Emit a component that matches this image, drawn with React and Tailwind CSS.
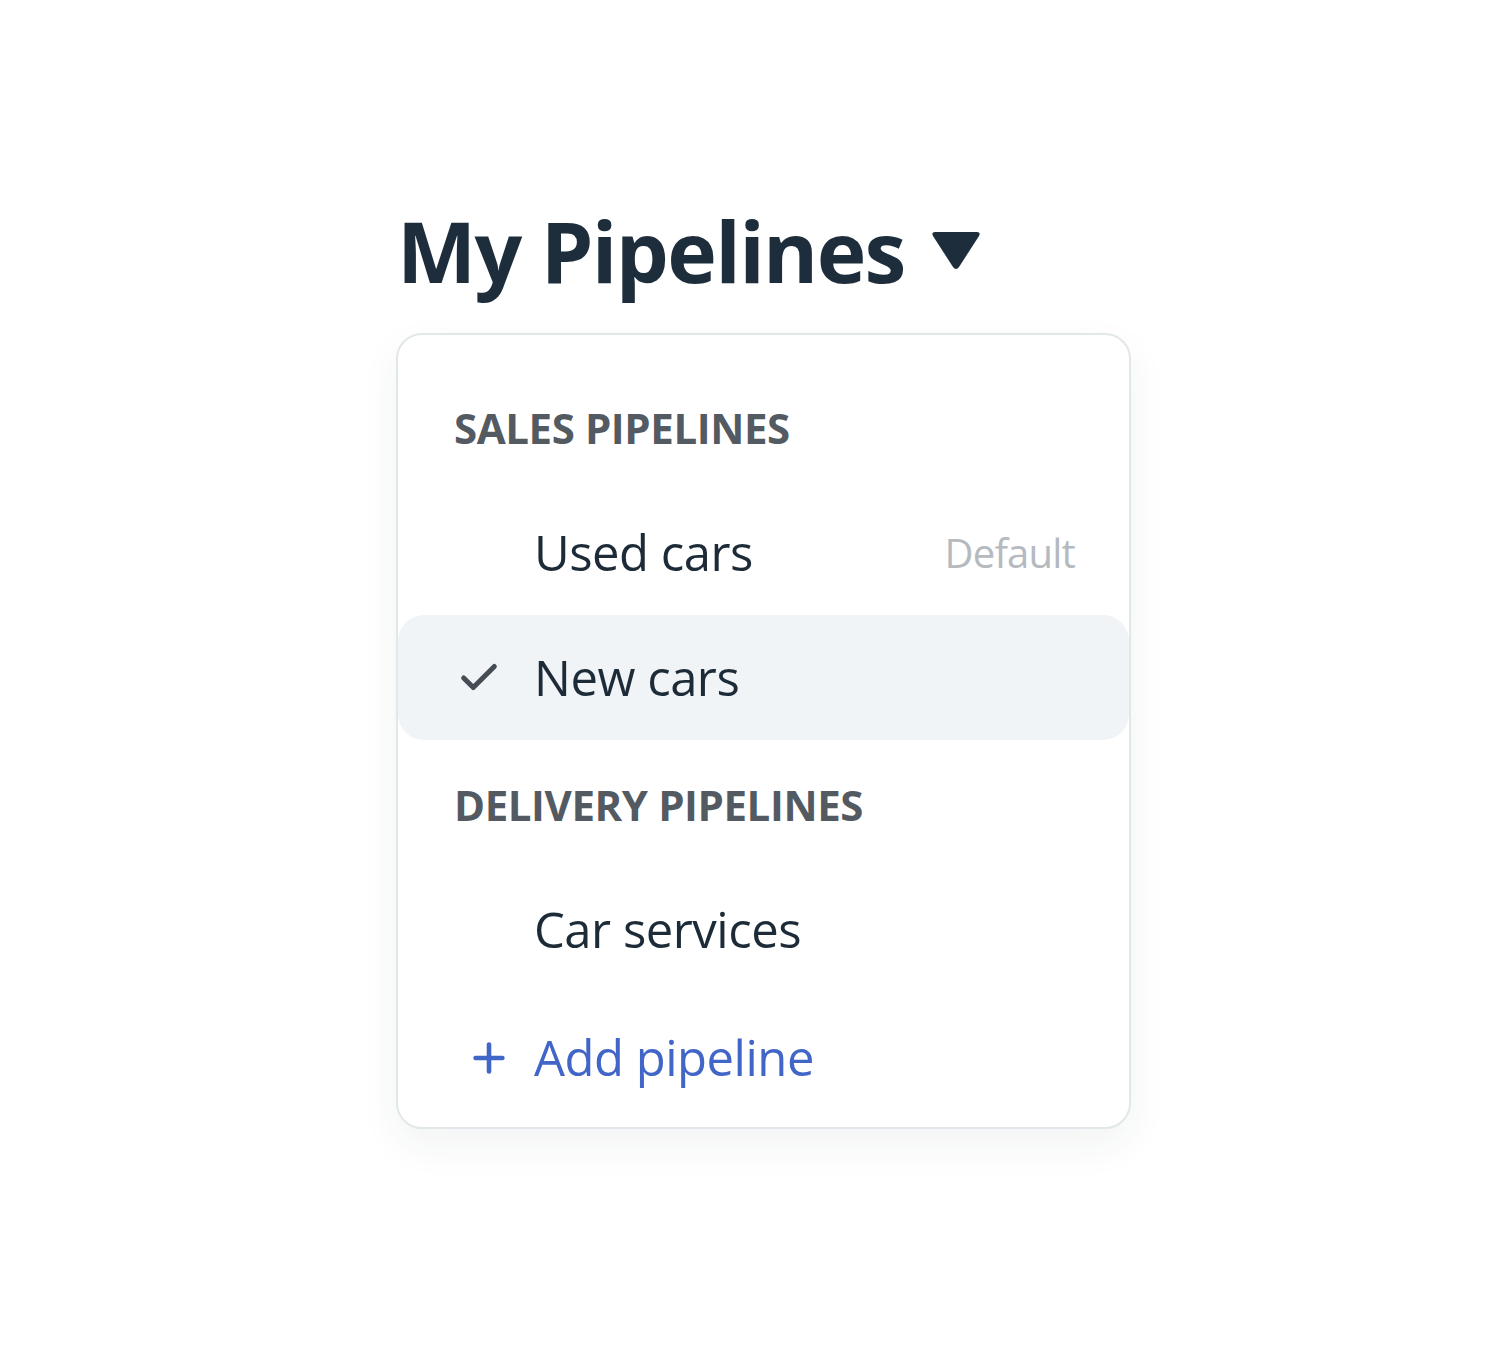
import { Check, Plus } from 'lucide-react';

const Item = ({ label, note, active }) => (
    <div
        className={`flex items-center h-[125px] pl-[60px] pr-[54px] rounded-[26px] ${active ? 'bg-[#f1f4f7]' : ''}`}
    >
        <div className="w-[76px] shrink-0">
            {active && <Check className="w-[46px] h-[46px] -ml-[2px] text-[#454c54]" strokeWidth={2.6} />}
        </div>
        <span className="text-[49px] text-[#1d2b38] tracking-[-0.01em]">{label}</span>
        {note && <span className="ml-auto text-[40px] text-[#b5babf] tracking-[-0.02em]">{note}</span>}
    </div>
);

const GroupTitle = ({ children }) => (
    <div className="flex items-center h-[125px] pl-[56px] text-[42px] font-bold text-[#535a61] tracking-[-0.01em]">
        {children}
    </div>
);

const App = () => {
    return (
        <div className="min-h-screen bg-white font-['Open_Sans',sans-serif] pt-[209px] pl-[396px]">
            <div className="flex items-center gap-[26px] pl-[1px]">
                <h1 className="text-[84px] font-bold leading-none text-[#1d2d3b] tracking-[-0.02em]">My Pipelines</h1>
                <svg width="50" height="40" viewBox="0 0 50 40" className="-mt-[2px]">
                    <path d="M4 2 H46 Q50 2 48 6 L28 37 Q25 41 22 37 L2 6 Q0 2 4 2 Z" fill="#1d2d3b" />
                </svg>
            </div>

            <div className="mt-[40px] w-[735px] border-2 border-[#e2e7ea] rounded-[26px] bg-white pt-[30px] pb-[8px] shadow-[0_16px_40px_rgba(30,45,60,0.06)]">
                <GroupTitle>SALES PIPELINES</GroupTitle>
                <Item label="Used cars" note="Default" />
                <Item label="New cars" active />
                <div className="h-[2px]" />
                <GroupTitle>DELIVERY PIPELINES</GroupTitle>
                <Item label="Car services" />
                <div className="flex items-center h-[127px] pl-[68px] pt-[4px]">
                    <div className="w-[68px] shrink-0">
                        <Plus className="w-[46px] h-[46px] text-[#4166c7]" strokeWidth={2.4} />
                    </div>
                    <span className="text-[49px] text-[#4166c7] tracking-[-0.01em]">Add pipeline</span>
                </div>
            </div>
        </div>
    );
};

export default App;
